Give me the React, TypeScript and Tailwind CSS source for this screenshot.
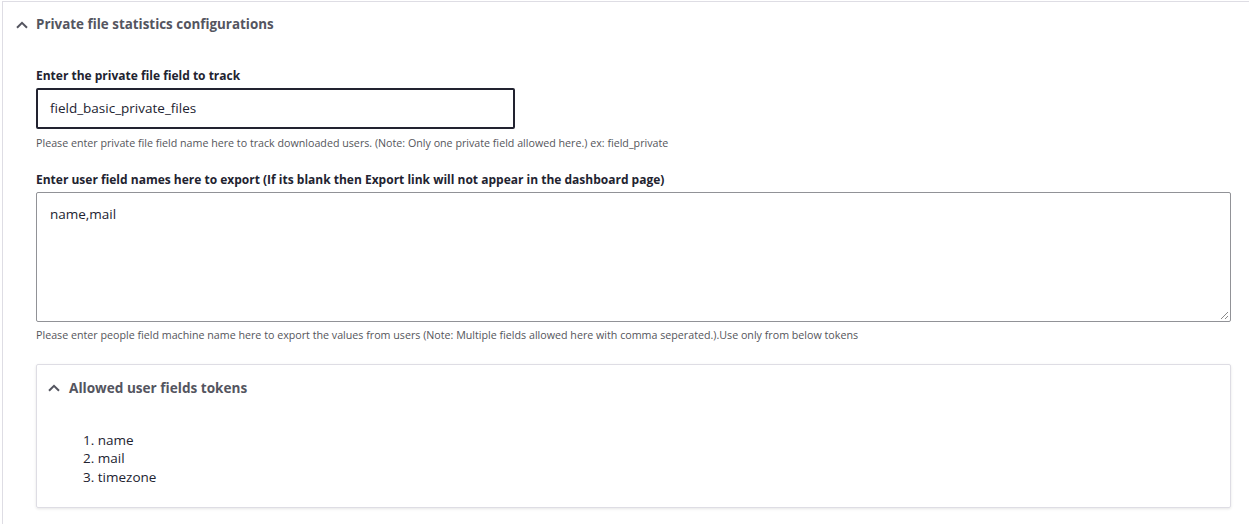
import React from 'react'

const font = { fontFamily: '"Open Sans", "Noto Sans", Arial, sans-serif' }

function Chevron() {
  return (
    <svg width="12" height="8" viewBox="0 0 12 8" fill="none">
      <path d="M1 6.8 L6 1.8 L11 6.8" stroke="#545560" strokeWidth="2" />
    </svg>
  )
}

export default function App() {
  const tokens = ['name', 'mail', 'timezone']

  return (
    <div className="w-full h-[524px] overflow-hidden bg-white" style={font}>
      {/* Outer details panel — runs past the right and bottom edge */}
      <div className="ml-[2px] mt-[1px] w-[1270px] h-[600px] border-l border-t border-[#dedde4]">
        <div className="flex items-center h-[45px] pl-[13px] gap-[8px]">
          <Chevron />
          <span className="text-[13.4px] font-bold text-[#545560]">
            Private file statistics configurations
          </span>
        </div>

        <div className="pl-[33px] w-[1229px] pt-[21px]">
          {/* Private file field */}
          <label className="block text-[12px] leading-[16px] font-bold text-[#222330]">
            Enter the private file field to track
          </label>
          <div className="mt-[4px] w-[479px] h-[41px] border-2 border-[#222330] rounded-[2px] flex items-center pl-[12px] text-[13.5px] text-[#222330]">
            field_basic_private_files
          </div>
          <p className="mt-[7px] text-[10.7px] leading-[14px] text-[#55565b]">
            Please enter private file field name here to track downloaded users. (Note: Only one private field allowed here.) ex: field_private
          </p>

          {/* Export fields */}
          <label className="block mt-[22px] text-[12px] leading-[16px] font-bold text-[#222330]">
            Enter user field names here to export (If its blank then Export link will not appear in the dashboard page)
          </label>
          <div className="relative mt-[4px] w-[1195px] h-[130px] border border-[#919297] rounded-[2px] pl-[13px] pt-[12px] text-[13.5px] leading-[18px] text-[#222330]">
            name,mail
            <svg width="10" height="10" viewBox="0 0 10 10" className="absolute right-[1px] bottom-[1px]">
              <path d="M9 2 L2 9 M9 6 L6 9" stroke="#8a8a8a" strokeWidth="1" />
            </svg>
          </div>
          <p className="mt-[6px] text-[10.7px] leading-[14px] text-[#55565b]">
            Please enter people field machine name here to export the values from users (Note: Multiple fields allowed here with comma seperated.).Use only from below tokens
          </p>

          {/* Inner details: allowed tokens */}
          <div className="mt-[22px] w-[1195px] h-[144px] border border-[#dedde4] rounded-[2px] shadow-[0_1px_3px_rgba(0,0,0,0.1)]">
            <div className="flex items-center h-[46px] pl-[11px] gap-[9px]">
              <Chevron />
              <span className="text-[13.6px] font-bold text-[#545560]">
                Allowed user fields tokens
              </span>
            </div>
            <ol className="mt-[20px] pl-[46px] text-[13.5px] leading-[18.4px] text-[#222330]">
              {tokens.map((t, i) => (
                <li key={t}>
                  {i + 1}. {t}
                </li>
              ))}
            </ol>
          </div>
        </div>
      </div>
    </div>
  )
}
